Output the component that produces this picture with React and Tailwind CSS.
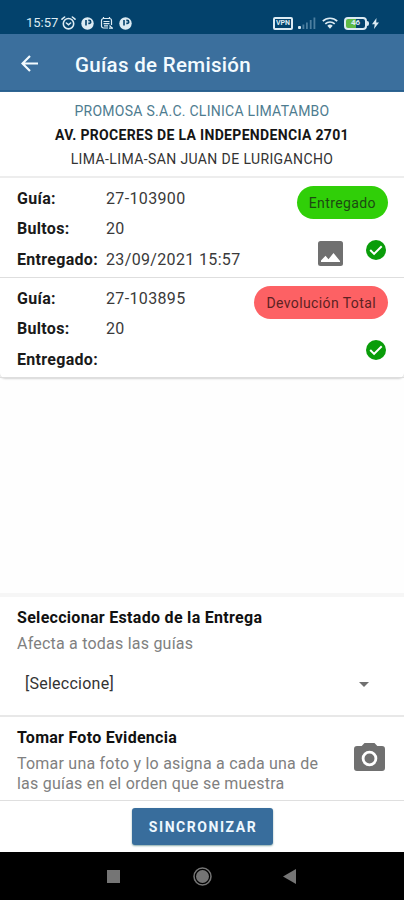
import React from "react";

function NfcDot() {
  return (
    <svg width="13" height="13" viewBox="0 0 13 13">
      <circle cx="6.5" cy="6.5" r="6.2" fill="#dcebf3" />
      <path d="M5 3v5.600M7.300 3.400h.9a1.500 1.500 0 0 1 0 3h-.9" fill="none" stroke="#04426b" strokeWidth="1.6" />
    </svg>
  );
}

function StatusBar() {
  return (
    <div className="h-[34px] shrink-0 bg-[#03426c] flex items-start justify-between pl-[26px] pr-[25px] pt-[15px] text-[#dcebf3]">
      <div className="flex items-center h-4">
        <span className="text-[13px] leading-4 w-[34px] whitespace-nowrap">15:57</span>
        <svg className="ml-[1px]" width="15" height="14" viewBox="0 0 15 14" fill="none" stroke="currentColor" strokeWidth="1.6" strokeLinecap="round">
          <circle cx="7.5" cy="7.7" r="5.200" />
          <path d="M1 3.2 3.6 1M14 3.2 11.4 1M5.4 7l2.1 1.8L9.6 7" />
        </svg>
        <span className="ml-[5px]"><NfcDot /></span>
        <svg className="ml-[6px]" width="14" height="14" viewBox="0 0 14 14" fill="none" stroke="currentColor" strokeWidth="1.2">
          <path d="M8 12H3.5A2 2 0 0 1 1.500 10V4.500a2 2 0 0 1 2-2h6a2 2 0 0 1 2 2V9M3.500 2.500V1M9.500 2.500V1M3.500 5.500h6M3.500 7.700h6M9 12.200h4" />
          <path d="M9.500 9.500 12 12M4 9.800h4" />
        </svg>
        <span className="ml-[5px]"><NfcDot /></span>
      </div>
      <div className="flex items-center h-4">
        <div className="w-[20px] h-[13px] border-2 border-[#dcebf3] rounded-[2px] flex items-center justify-center text-[7px] leading-none font-bold">VPN</div>
        <svg className="ml-[5px]" width="18" height="12" viewBox="0 0 18 12" fill="#4c7e9f">
          <rect x="0" y="9" width="3" height="3" rx="1" fill="#dcebf3" />
          <rect x="4.500" y="7.500" width="1.800" height="4.500" />
          <rect x="8" y="5.500" width="1.800" height="6.500" />
          <rect x="11.800" y="3" width="1.800" height="9" />
          <rect x="15.500" y="0.500" width="1.800" height="11.500" />
        </svg>
        <svg className="ml-[6px]" width="16" height="12" viewBox="0 0 16 12" fill="none" stroke="currentColor" strokeWidth="1.700">
          <path d="M.8 4.200a10.300 10.300 0 0 1 14.400 0M3.300 6.900a6.800 6.800 0 0 1 9.400 0" />
          <path d="M5.300 8.800a4 4 0 0 1 5.400 0L8 11.800z" fill="currentColor" stroke="none" />
        </svg>
        <div className="ml-[6px] w-[23px] h-[13px] border-2 border-[#dcebf3] rounded-[4px] flex items-center justify-center text-[8px] leading-none font-bold bg-linear-to-r from-[#5fb946] from-50% to-[#03426c] to-50%">46</div>
        <div className="w-[2px] h-[5px] bg-[#dcebf3] rounded-r-sm" />
        <svg className="ml-[3px]" width="7" height="11" viewBox="0 0 7 11" fill="currentColor">
          <path d="M4.500 0 0 6.200h2.700L2 11l5-6.500H4.200z" />
        </svg>
      </div>
    </div>
  );
}

function CheckBadge() {
  return (
    <svg width="20" height="20" viewBox="0 0 20 20">
      <circle cx="10" cy="10" r="10" fill="#0a9d0a" />
      <path d="m4.200 10 3.900 3.900 7.600-7.600" fill="none" stroke="#fff" strokeWidth="2" />
    </svg>
  );
}

function PhotoIcon() {
  return (
    <svg width="25" height="25" viewBox="0 0 25 25">
      <rect width="25" height="25" rx="2.500" fill="#707070" />
      <path d="M3 21v-1.500l4.500-4.700 3 3.400 5-6.200L22 20v1z" fill="#fff" />
    </svg>
  );
}

function Guide({ number, packages, delivered, status, chip, photo }) {
  return (
    <div className="h-[99px] flex justify-between pl-[17px] pr-4 border-b border-[#dedede] box-content">
      <div className="pt-[6px] text-base tracking-[0.300px]">
        {[["Guía:", number], ["Bultos:", packages], ["Entregado:", delivered]].map(([label, value]) => (
          <div key={label} className="flex h-[30.300px] items-center whitespace-nowrap">
            <span className="w-[89px] font-bold text-[#1a1a1a]">{label}</span>
            <span className="text-[#3a3a3a] tracking-[0.350px]">{value}</span>
          </div>
        ))}
      </div>
      <div className="flex flex-col items-end pt-[8px]">
        <span className={"h-[33px] rounded-full px-3 pt-[1px] flex items-center text-[14px] tracking-[0.400px] whitespace-nowrap " + chip}>{status}</span>
        <div className="mt-[21px] mr-[2px] flex items-start gap-[23px]">
          {photo && <div className="mt-[1px]"><PhotoIcon /></div>}
          <CheckBadge />
        </div>
      </div>
    </div>
  );
}

export default function App() {
  return (
    <div className="w-[404px] h-[900px] flex flex-col bg-white overflow-hidden font-[Roboto,sans-serif] antialiased">
      <StatusBar />
      <header className="h-[58px] shrink-0 bg-[#3b6f9d] border-b-2 border-[#28608f] flex items-center pl-[21px] text-[#f3fbff]">
        <svg className="mt-[2px]" width="17" height="17" viewBox="0 0 17 17" fill="none" stroke="currentColor" strokeWidth="2.200">
          <path d="M17 8.500H2M9 1 1.500 8.500 9 16" />
        </svg>
        <h1 className="ml-[37px] mt-[5px] text-[20.500px] leading-6 font-medium tracking-[0.300px]">Guías de Remisión</h1>
      </header>
      <main className="flex-1 bg-[#fefefe]">
        <div className="bg-white rounded-b-[5px] shadow-[0_1px_2px_#d4d4d4]">
          <div className="h-[86px] pt-[7px] border-b-2 border-[#ededed] text-center text-[14px] leading-6 text-[#333] whitespace-nowrap">
            <p className="text-[#4e7c90] tracking-[0.270px]">PROMOSA S.A.C. CLINICA LIMATAMBO</p>
            <p className="font-bold text-[#151515] tracking-[0.330px]">AV. PROCERES DE LA INDEPENDENCIA 2701</p>
            <p className="tracking-[0.390px]">LIMA-LIMA-SAN JUAN DE LURIGANCHO</p>
          </div>
          <Guide number="27-103900" packages="20" delivered="23/09/2021 15:57" status="Entregado" chip="bg-[#30cf08] text-[#1c4a12]" photo />
          <Guide number="27-103895" packages="20" status="Devolución Total" chip="bg-[#fd6164] text-[#5c2222]" />
        </div>
      </main>
      <section className="h-[122px] shrink-0 border-t-4 border-[#f6f6f6] pl-[17px] pr-[35px] pt-[9px]">
        <h2 className="text-base leading-6 font-bold text-[#111] tracking-[0.300px]">Seleccionar Estado de la Entrega</h2>
        <p className="mt-[2px] text-base leading-6 text-[#808080] tracking-[0.220px]">Afecta a todas las guías</p>
        <div className="mt-[16px] pl-2 flex items-center justify-between">
          <span className="text-base leading-6 text-[#333] tracking-[0.250px]">[Seleccione]</span>
          <svg width="10" height="5" viewBox="0 0 10 5" fill="#707070"><path d="M0 0h10L5 5z" /></svg>
        </div>
      </section>
      <section className="h-[85px] shrink-0 border-t-2 border-[#e8e8e8] pl-[17px] pr-[19px] flex justify-between">
        <div className="pt-[9px] whitespace-nowrap">
          <h2 className="text-base leading-6 font-bold text-[#111] tracking-[0.270px]">Tomar Foto Evidencia</h2>
          <p className="mt-[4px] text-base leading-[19.500px] text-[#808080] tracking-[0.220px]">Tomar una foto y lo asigna a cada una de<br />las guías en el orden que se muestra</p>
        </div>
        <svg className="mt-[26px]" width="31" height="28" viewBox="0 0 31 28">
          <path d="M10.500 0h10l2.800 3H28a3 3 0 0 1 3 3v19a3 3 0 0 1-3 3H3a3 3 0 0 1-3-3V6a3 3 0 0 1 3-3h4.700z" fill="#707070" />
          <circle cx="15.500" cy="15.500" r="6.400" fill="none" stroke="#fff" strokeWidth="2.800" />
        </svg>
      </section>
      <section className="h-[52px] shrink-0 border-t border-[#dfdfdf] flex justify-center items-start pt-[7px]">
        <button className="w-[141px] h-[37px] rounded-[3px] bg-[#386d9c] text-[#eef8ff] text-[14px] pt-[2px] pl-[2px] font-bold tracking-[1.550px] shadow-[0_1px_2px_#8aa]">SINCRONIZAR</button>
      </section>
      <nav className="h-12 shrink-0 bg-black flex items-center">
        <div className="ml-[107px] w-[13px] h-[13px] bg-[#757575]" />
        <svg className="ml-[73px]" width="19" height="19" viewBox="0 0 19 19">
          <circle cx="9.500" cy="9.500" r="8.500" fill="none" stroke="#757575" strokeWidth="1.500" />
          <circle cx="9.500" cy="9.500" r="6.500" fill="#757575" />
        </svg>
        <svg className="ml-[71px]" width="13" height="15" viewBox="0 0 13 15" fill="#757575"><path d="M13 0v15L0 7.500z" /></svg>
      </nav>
    </div>
  );
}
